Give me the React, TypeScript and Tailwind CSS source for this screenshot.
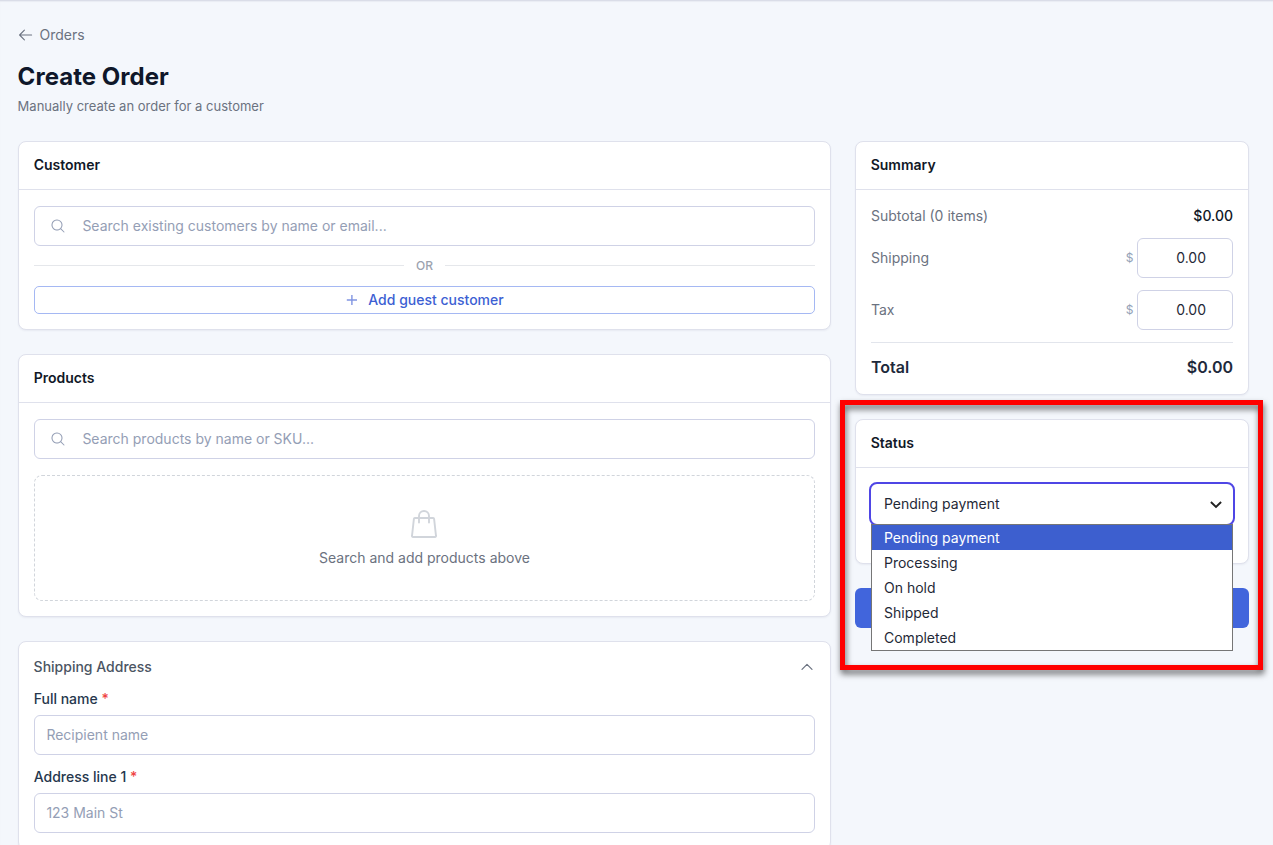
import React from "react";
import { PiMagnifyingGlass } from "react-icons/pi";

const statuses = ["Pending payment", "Processing", "On hold", "Shipped", "Completed"];

function Card({ title, children, className = "" }: { title?: string; children: React.ReactNode; className?: string }) {
  return (
    <section className={`rounded-lg border border-[#dfe1ec] bg-white shadow-[0_1px_2px_rgba(30,40,80,0.06)] ${className}`}>
      {title && (
        <h2 className="flex h-12 items-center border-b border-[#dfe1ec] px-[14.7px] pb-px text-sm font-semibold text-[#111827]">
          {title}
        </h2>
      )}
      {children}
    </section>
  );
}

function SearchField({ placeholder }: { placeholder: string }) {
  return (
    <label className="flex h-10 items-center rounded-md border border-[#cfd2e6] pl-[15px] text-[#949eb5]">
      <PiMagnifyingGlass className="size-4 shrink-0" />
      <input
        className="ml-[16.4px] min-w-0 flex-1 bg-transparent text-sm outline-none placeholder:text-[#949eb5]"
        placeholder={placeholder}
      />
    </label>
  );
}

function AddressField({ label, placeholder }: { label: string; placeholder: string }) {
  return (
    <label className="flex flex-col">
      <span className="-ml-[0.3px] text-sm leading-5 font-medium text-[#26374d]">
        {label} <span className="text-[#ef4444]">*</span>
      </span>
      <input
        className="mt-1.5 h-10 rounded-md border border-[#cfd2e6] px-[11.4px] pb-px text-sm outline-none placeholder:text-[#949eb5]"
        placeholder={placeholder}
      />
    </label>
  );
}

function AmountRow({ label }: { label: string }) {
  return (
    <div className="flex h-10 items-center">
      <span className="flex-1 text-[#6b7280]">{label}</span>
      <span className="mr-[3.5px] text-xs text-[#94a3b8]">$</span>
      <input
        className="h-10 w-24 rounded-md border border-[#cfd2e6] pr-[26px] pb-px text-right text-[#1f2937] outline-none"
        defaultValue="0.00"
      />
    </div>
  );
}

function ArrowLeftIcon() {
  return (
    <svg className="size-4" viewBox="0 0 16 16" fill="none" stroke="currentColor" strokeWidth="1.1" strokeLinecap="round" strokeLinejoin="round">
      <path d="M13.6 8H1.6M6.4 3.2 1.6 8l4.8 4.8" />
    </svg>
  );
}

function PlusIcon() {
  return (
    <svg className="size-4" viewBox="0 0 16 16" fill="none" stroke="#8195e2" strokeWidth="1.4">
      <path d="M2.8 8h10.2M7.9 2.9v10.2" />
    </svg>
  );
}

function CaretUpIcon() {
  return (
    <svg className="size-4 text-[#6b7280]" viewBox="0 0 16 16" fill="none" stroke="currentColor" strokeWidth="1.2" strokeLinecap="round" strokeLinejoin="round">
      <path d="m3 10.4 5-5 5 5" />
    </svg>
  );
}

function BagIcon() {
  return (
    <svg className="mr-0.5 h-7 w-[26px]" viewBox="0 0 26 28" fill="none" stroke="#d1d5db" strokeWidth="1.9" strokeLinecap="round" strokeLinejoin="round">
      <path d="M3.9 8h18.2a1 1 0 0 1 1 .9L25 25.8a1 1 0 0 1-1 1.2H2a1 1 0 0 1-1-1.2L2.9 8.9a1 1 0 0 1 1-.9Z" />
      <path d="M8 12.5V6a5 5 0 0 1 10 0v6.5" />
    </svg>
  );
}

export default function App() {
  return (
    <div className="relative h-[845px] w-[1273px] overflow-hidden border-t border-[#dadde8] bg-[#f4f7fc] pl-[18px] pr-6 font-['Inter',sans-serif] text-sm text-[#1f2937] shadow-[inset_0_1px_1px_rgba(30,40,80,0.05)]">
      <a className="mt-6 flex h-5 w-fit items-center text-[#6b7280]">
        <ArrowLeftIcon />
        <span className="ml-[5.5px]">Orders</span>
      </a>
      <h1 className="mt-4 -ml-[0.4px] text-2xl leading-8 font-bold tracking-[0.04px] text-[#0f172a]">Create Order</h1>
      <p className="mt-[3px] -ml-[0.4px] text-[13px] leading-5 text-[#6b7280]">Manually create an order for a customer</p>

      <div className="mt-[25px] grid grid-cols-[813px_394px] items-start gap-6">
        <div className="flex flex-col gap-6">
          <Card title="Customer">
            <div className="px-[15px] pt-4 pb-[15px]">
              <SearchField placeholder="Search existing customers by name or email..." />
              <div className="my-3 flex h-4 items-center gap-3 text-xs font-medium text-[#9ca3af]">
                <span className="mb-px h-px flex-1 bg-[#e5e7eb]" />
                OR
                <span className="mb-px h-px flex-1 bg-[#e5e7eb]" />
              </div>
              <button className="flex h-7 w-full items-center justify-center gap-2 rounded-[5px] border border-[#a5b8f3] pr-px font-medium text-[#3d5fd3]">
                <PlusIcon />
                Add guest customer
              </button>
            </div>
          </Card>

          <Card title="Products">
            <div className="px-[15px] pt-4 pb-[15px]">
              <SearchField placeholder="Search products by name or SKU..." />
              <div className="mt-4 flex h-[126px] flex-col items-center rounded-lg border border-dashed border-[#d1d5db] pt-[34px]">
                <BagIcon />
                <p className="mt-2.5 leading-5 text-[#6b7280]">Search and add products above</p>
              </div>
            </div>
          </Card>

          <Card>
            <div className="flex flex-col px-[15px] pt-[15px] pb-4">
              <div className="mb-3 -ml-[0.4px] flex h-5 items-center justify-between font-medium text-[#4b5563]">
                Shipping Address
                <CaretUpIcon />
              </div>
              <div className="flex flex-col gap-3">
                <AddressField label="Full name" placeholder="Recipient name" />
                <AddressField label="Address line 1" placeholder="123 Main St" />
              </div>
            </div>
          </Card>
        </div>

        <div className="flex flex-col gap-6">
          <Card title="Summary">
            <div className="flex flex-col px-[15px] pt-4 pb-[15px]">
              <div className="mb-3 flex h-5 items-center justify-between">
                <span className="text-[#6b7280]">Subtotal (0 items)</span>
                <span className="font-medium text-[#111827]">$0.00</span>
              </div>
              <div className="flex flex-col gap-3">
                <AmountRow label="Shipping" />
                <AmountRow label="Tax" />
              </div>
              <div className="mt-3 flex items-center justify-between border-t border-[#e2e5ec] pt-3 text-base leading-6 font-semibold text-[#1e293b]">
                <span>Total</span>
                <span>$0.00</span>
              </div>
            </div>
          </Card>

          <Card title="Status" className="h-[145px]">
            <div className="px-[13px] pt-3.5">
              <div className="relative">
                <div className="flex h-11 items-center justify-between rounded-lg border-2 border-[#4f46e5] pr-[9px] pl-[13px]">
                  Pending payment
                  <svg className="size-4" viewBox="0 0 16 16" fill="none" stroke="#222222" strokeWidth="1.9">
                    <path d="m2.9 6 5.1 5 5.1-5" />
                  </svg>
                </div>
                <ul className="absolute top-[42px] right-0.5 left-0.5 z-10 border border-[#767676] bg-white">
                  {statuses.map((status, i) => (
                    <li
                      key={status}
                      className={`flex h-[25px] items-center pl-3 ${i === 0 ? "bg-[#3d5fcf] text-white" : ""}`}
                    >
                      {status}
                    </li>
                  ))}
                </ul>
              </div>
            </div>
          </Card>
          <button className="h-10 rounded-md bg-[#4165dc] font-medium text-white">Create Order</button>
        </div>
      </div>

      <div className="pointer-events-none absolute top-[399px] left-[840px] z-20 h-[270px] w-[423px] border-[5px] border-[#ff0000] drop-shadow-[1px_4px_3px_rgba(0,0,0,0.6)]" />
    </div>
  );
}
